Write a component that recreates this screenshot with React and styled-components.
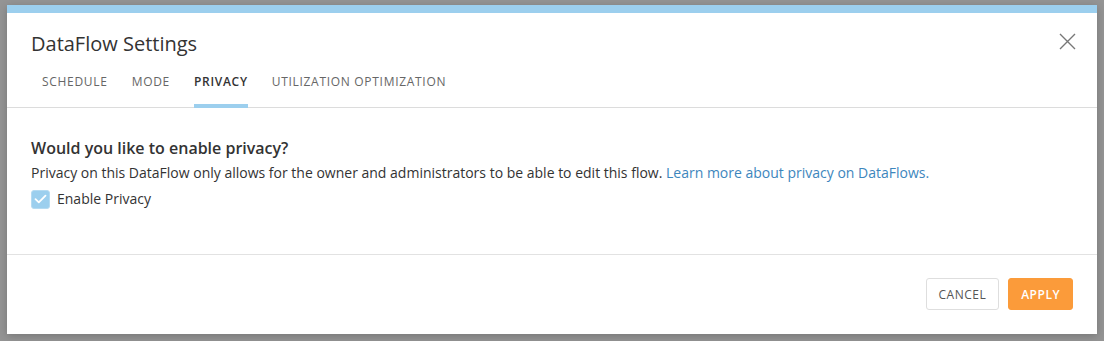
import React, { useState } from 'react';
import styled, { createGlobalStyle } from 'styled-components';

const GlobalStyle = createGlobalStyle`
  html, body {
    margin: 0;
    padding: 0;
    background: #949494;
    font-family: 'Open Sans', 'Liberation Sans', sans-serif;
    color: #333;
  }
  * { box-sizing: border-box; }
`;

const Backdrop = styled.div`
  width: 1104px;
  height: 341px;
  padding: 5px 7px 7px;
  background: #949494;
  display: flex;
`;

const Modal = styled.div`
  flex: 1;
  background: #fff;
  border-top: 8px solid #9ccfee;
  box-shadow: 0 2px 8px rgba(0, 0, 0, 0.2);
  display: flex;
  flex-direction: column;
`;

const Header = styled.div`
  position: relative;
  padding-top: 17px;
  border-bottom: 1px solid #dcdcdc;
`;

const Title = styled.h2`
  margin: 0 0 0 24px;
  font-size: 20px;
  line-height: 28px;
  font-weight: 400;
  color: #333;
`;

const CloseButton = styled.button`
  position: absolute;
  top: 20px;
  right: 21px;
  width: 17px;
  height: 17px;
  padding: 0;
  border: none;
  background: none;
  cursor: pointer;
  display: flex;
  align-items: center;
  justify-content: center;
`;

const Tabs = styled.div`
  display: flex;
  gap: 24px;
  margin-top: 16px;
  padding-left: 35px;
`;

const Tab = styled.button`
  padding: 0 0 14px;
  border: none;
  border-bottom: 4px solid ${(p) => (p.$active ? '#9ccfee' : 'transparent')};
  background: none;
  font-family: inherit;
  font-size: 12px;
  line-height: 16px;
  letter-spacing: 0.7px;
  text-transform: uppercase;
  font-weight: ${(p) => (p.$active ? 600 : 400)};
  color: ${(p) => (p.$active ? '#333' : '#666')};
  cursor: pointer;
  margin-bottom: -1px;
`;

const Body = styled.div`
  padding: 29px 24px 45px;
  border-bottom: 1px solid #e2e2e2;
`;

const Heading = styled.h3`
  margin: 0;
  font-size: 16px;
  line-height: 22px;
  font-weight: 600;
  color: #333;
`;

const Text = styled.p`
  margin: 4px 0 0;
  font-size: 14px;
  line-height: 20px;
  color: #333;
`;

const Link = styled.a`
  color: #3d86bd;
  text-decoration: none;
`;

const CheckRow = styled.label`
  display: flex;
  align-items: center;
  gap: 7px;
  margin-top: 6px;
  font-size: 14px;
  line-height: 20px;
  color: #333;
  cursor: pointer;
`;

const Box = styled.span`
  width: 19px;
  height: 19px;
  border-radius: 3px;
  background: ${(p) => (p.$checked ? '#9ccfee' : '#fff')};
  border: 1px solid ${(p) => (p.$checked ? '#b5dbf2' : '#ccc')};
  display: flex;
  align-items: center;
  justify-content: center;
`;

const Footer = styled.div`
  display: flex;
  justify-content: flex-end;
  gap: 9px;
  padding: 23px 24px 24px;
`;

const Button = styled.button`
  height: 32px;
  padding: 0 12px;
  border-radius: 3px;
  font-family: inherit;
  font-size: 12px;
  letter-spacing: 0.5px;
  text-transform: uppercase;
  cursor: pointer;
  border: 1px solid ${(p) => (p.$primary ? '#fb9b3a' : '#dedede')};
  background: ${(p) => (p.$primary ? '#fb9b3a' : '#fff')};
  color: ${(p) => (p.$primary ? '#fff' : '#555')};
  font-weight: ${(p) => (p.$primary ? 600 : 400)};
`;

const tabs = ['Schedule', 'Mode', 'Privacy', 'Utilization Optimization'];

export default function App() {
  const [active, setActive] = useState('Privacy');
  const [checked, setChecked] = useState(true);

  return (
    <Backdrop>
      <GlobalStyle />
      <Modal>
        <Header>
          <Title>DataFlow Settings</Title>
          <CloseButton aria-label="Close">
            <svg width="17" height="17" viewBox="0 0 17 17">
              <path d="M1 1L16 16M16 1L1 16" stroke="#777" strokeWidth="1.4" fill="none" />
            </svg>
          </CloseButton>
          <Tabs>
            {tabs.map((t) => (
              <Tab key={t} $active={t === active} onClick={() => setActive(t)}>
                {t}
              </Tab>
            ))}
          </Tabs>
        </Header>
        <Body>
          <Heading>Would you like to enable privacy?</Heading>
          <Text>
            Privacy on this DataFlow only allows for the owner and administrators to be able to edit this flow.{' '}
            <Link href="#">Learn more about privacy on DataFlows.</Link>
          </Text>
          <CheckRow onClick={() => setChecked(!checked)}>
            <Box $checked={checked}>
              {checked && (
                <svg width="13" height="10" viewBox="0 0 13 10">
                  <path d="M1.5 5.2L4.8 8.3L11.5 1.6" stroke="#fff" strokeWidth="1.8" fill="none" strokeLinecap="round" strokeLinejoin="round" />
                </svg>
              )}
            </Box>
            Enable Privacy
          </CheckRow>
        </Body>
        <Footer>
          <Button>Cancel</Button>
          <Button $primary>Apply</Button>
        </Footer>
      </Modal>
    </Backdrop>
  );
}
